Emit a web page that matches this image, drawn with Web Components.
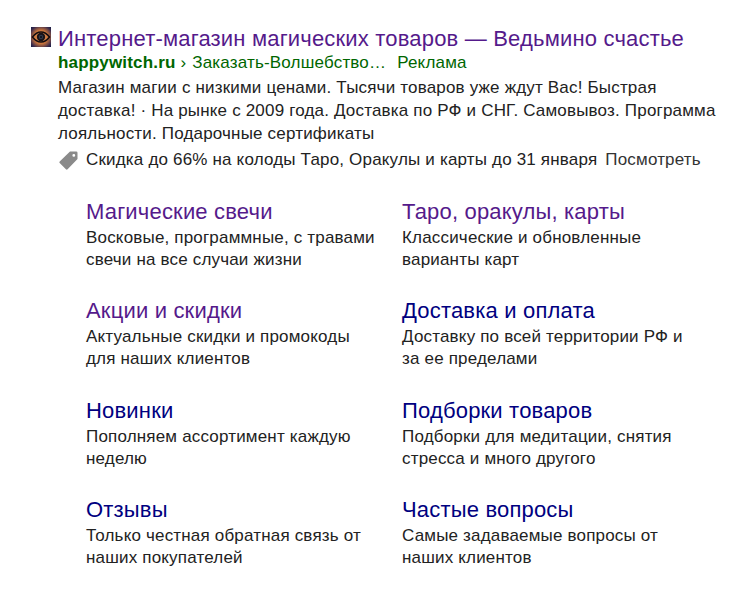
<!DOCTYPE html>
<html lang="ru">
<head>
<meta charset="utf-8">
<title>Ведьмино счастье</title>
<style>
  html, body { margin: 0; background: #fff; }
  body { font-family: "Liberation Sans", Arial, sans-serif; color: #222; letter-spacing: .18px; }
</style>
</head>
<body>
<ad-result>
  <ad-favicon slot="icon"></ad-favicon>
  <span slot="title">Интернет-магазин магических товаров — Ведьмино счастье</span>
  <span slot="domain">happywitch.ru</span>
  <span slot="path">Заказать-Волшебство…</span>
  <span slot="label">Реклама</span>
  <span slot="text">Магазин магии с низкими ценами. Тысячи товаров уже ждут Вас! Быстрая доставка! · На рынке с 2009 года. Доставка по РФ и СНГ. Самовывоз. Программа лояльности. Подарочные сертификаты</span>
  <ad-promo slot="promo" action="Посмотреть">Скидка до 66% на колоды Таро, Оракулы и карты до 31 января</ad-promo>
  <site-links slot="links">
    <site-link heading="Магические свечи" visited>Восковые, программные, с травами свечи на все случаи жизни</site-link>
    <site-link heading="Таро, оракулы, карты" visited>Классические и обновленные варианты карт</site-link>
    <site-link heading="Акции и скидки" visited>Актуальные скидки и промокоды для наших клиентов</site-link>
    <site-link heading="Доставка и оплата">Доставку по всей территории РФ и за ее пределами</site-link>
    <site-link heading="Новинки">Пополняем ассортимент каждую неделю</site-link>
    <site-link heading="Подборки товаров">Подборки для медитации, снятия стресса и много другого</site-link>
    <site-link heading="Отзывы">Только честная обратная связь от наших покупателей</site-link>
    <site-link heading="Частые вопросы">Самые задаваемые вопросы от наших клиентов</site-link>
  </site-links>
</ad-result>

<script>
// Small helper: every element clones its own template into an open shadow root.
function makeTemplate (html) {
  const template = document.createElement('template')
  template.innerHTML = html
  return template
}

const resultTemplate = makeTemplate(`
  <style>
    :host { display: block; width: 690px; padding: 25px 0 0 31px; }
    .head { display: flex; align-items: flex-start; }
    .side { width: 27px; flex: none; padding-top: 2px; }
    .main { flex: 1; min-width: 0; }
    .title { font-size: 22px; line-height: 27px; color: #551a8b; white-space: nowrap; }
    .meta { font-size: 17px; line-height: 22px; color: #060; white-space: nowrap; }
    .domain { font-weight: bold; }
    .sep { margin-right: 1px; }
    .label { margin-left: 11px; }
    .text { font-size: 17px; line-height: 23px; color: #222; margin-top: 2px; }
    .promo { margin-top: 4px; }
    .links { margin: 26px 0 0 55px; }
  </style>
  <div class="head">
    <div class="side"><slot name="icon"></slot></div>
    <div class="main">
      <div class="title"><slot name="title"></slot></div>
      <div class="meta"><span class="domain"><slot name="domain"></slot></span> <span class="sep">›</span> <slot name="path"></slot><span class="label"><slot name="label"></slot></span></div>
      <div class="text"><slot name="text"></slot></div>
      <div class="promo"><slot name="promo"></slot></div>
    </div>
  </div>
  <div class="links"><slot name="links"></slot></div>
`)

customElements.define('ad-result', class extends HTMLElement {
  constructor () {
    super()
    this.attachShadow({ mode: 'open' }).appendChild(resultTemplate.content.cloneNode(true))
  }
})

const faviconTemplate = makeTemplate(`
  <style>
    :host { display: block; width: 20px; height: 20px; }
    svg { display: block; }
  </style>
  <svg width="20" height="20" viewBox="0 0 20 20" aria-hidden="true">
    <defs>
      <radialGradient id="glow" cx="50%" cy="50%" r="68%">
        <stop offset="0" stop-color="#f0a060"/>
        <stop offset="0.5" stop-color="#c8743c"/>
        <stop offset="0.85" stop-color="#3c2c4c"/>
        <stop offset="1" stop-color="#1c2048"/>
      </radialGradient>
    </defs>
    <rect width="20" height="20" fill="url(#glow)"/>
    <path d="M1.500 10C4.500 6 7.500 5 10 5s5.500 1 8.500 5c-3 4-6 5-8.500 5s-5.500-1-8.500-5z" fill="none" stroke="#120c10" stroke-width="1.500"/>
    <circle cx="10" cy="10" r="4.200" fill="#1a1418"/>
    <circle cx="10" cy="10" r="2.200" fill="#30384c"/>
    <circle cx="10" cy="10" r="1" fill="#0c0c10"/>
  </svg>
`)

customElements.define('ad-favicon', class extends HTMLElement {
  constructor () {
    super()
    this.attachShadow({ mode: 'open' }).appendChild(faviconTemplate.content.cloneNode(true))
  }
})

const promoTemplate = makeTemplate(`
  <style>
    :host { display: block; font-size: 17px; line-height: 22px; color: #222; white-space: nowrap; }
    .row { display: flex; align-items: center; }
    svg { flex: none; margin-right: 7px; }
    .action { margin-left: 8px; color: #333; }
  </style>
  <div class="row">
    <svg width="21" height="21" viewBox="0 0 21 21" aria-hidden="true">
      <path fill="#8a8a8a" fill-rule="evenodd" d="M12 1.500h6.200a1.300 1.300 0 0 1 1.300 1.300V9L9.600 19.300a1.200 1.200 0 0 1-1.700 0l-6.200-6.200a1.200 1.200 0 0 1 0-1.700zM15.800 4a1.400 1.400 0 1 0 0 2.800 1.400 1.400 0 0 0 0-2.800z"/>
    </svg>
    <span><slot></slot></span>
    <span class="action"></span>
  </div>
`)

customElements.define('ad-promo', class extends HTMLElement {
  constructor () {
    super()
    this.attachShadow({ mode: 'open' }).appendChild(promoTemplate.content.cloneNode(true))
    this.shadowRoot.querySelector('.action').textContent = this.getAttribute('action')
  }
})

const linksTemplate = makeTemplate(`
  <style>
    :host { display: grid; grid-template-columns: 316px 316px; grid-auto-rows: 99.400px; }
  </style>
  <slot></slot>
`)

customElements.define('site-links', class extends HTMLElement {
  constructor () {
    super()
    this.attachShadow({ mode: 'open' }).appendChild(linksTemplate.content.cloneNode(true))
  }
})

const linkTemplate = makeTemplate(`
  <style>
    :host { display: block; width: 295px; }
    .heading { font-size: 22px; line-height: 30px; color: #000080; white-space: nowrap; }
    :host([visited]) .heading { color: #551a8b; }
    .text { font-size: 17px; line-height: 22px; color: #222; }
  </style>
  <div class="heading"></div>
  <div class="text"><slot></slot></div>
`)

customElements.define('site-link', class extends HTMLElement {
  constructor () {
    super()
    this.attachShadow({ mode: 'open' }).appendChild(linkTemplate.content.cloneNode(true))
    this.shadowRoot.querySelector('.heading').textContent = this.getAttribute('heading')
  }
})
</script>
</body>
</html>
